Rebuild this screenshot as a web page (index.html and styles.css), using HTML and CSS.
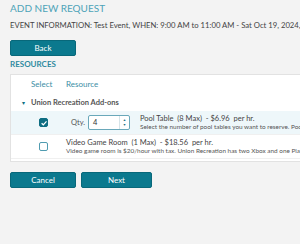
FILE: index.html
```html
<!DOCTYPE html>
<html lang="en">
<head>
    <meta charset="UTF-8">
    <meta name="viewport" content="width=device-width, initial-scale=1.0">
    <title>Add New Request</title>
    <link rel="stylesheet" href="styles.css">
</head>
<body>
    <div class="page">
        <h1 class="title">ADD NEW REQUEST</h1>
        <p class="event-info">EVENT INFORMATION: Test Event, WHEN: 9:00 AM to 11:00 AM - Sat Oct 19, 2024, WHERE: Union Recreation</p>
        <button class="btn btn-back">Back</button>
        <h2 class="section-title">RESOURCES</h2>
        <div class="panel">
            <div class="grid-row head-row">
                <div></div>
                <div class="head-cell">Select</div>
                <div class="head-cell">Resource</div>
            </div>
            <div class="grid-row group-row">
                <div class="arrow">&#9662;</div>
                <div class="group-name">Union Recreation Add-ons</div>
            </div>
            <div class="grid-row item-row selected">
                <div></div>
                <div class="check-cell"><span class="check checked"><svg viewBox="0 0 8 8" width="8" height="8"><path d="M1.6 4.2 L3.3 5.8 L6.5 2.3" fill="none" stroke="#fff" stroke-width="1.2"/></svg></span></div>
                <div class="resource-cell">
                    <span class="qty-label">Qty.</span>
                    <span class="qty-input"><span class="qty-value">4</span><span class="spinner"><span class="up">&#9650;</span><span class="down">&#9660;</span></span></span>
                    <div class="item-text">
                        <div class="item-name">Pool Table&nbsp; (8 Max)&nbsp; - $6.96&nbsp; per hr.</div>
                        <div class="item-desc">Select the number of pool tables you want to reserve. Pool tables are $6.96/hour with tax.</div>
                    </div>
                </div>
            </div>
            <div class="grid-row item-row">
                <div></div>
                <div class="check-cell"><span class="check"></span></div>
                <div class="resource-cell">
                    <div class="item-text">
                        <div class="item-name">Video Game Room&nbsp; (1 Max)&nbsp; - $18.56&nbsp; per hr.</div>
                        <div class="item-desc">Video game room is $20/hour with tax. Union Recreation has two Xbox and one Playstation.</div>
                    </div>
                </div>
            </div>
        </div>
        <div class="actions">
            <button class="btn btn-cancel">Cancel</button>
            <button class="btn btn-next">Next</button>
        </div>
    </div>
</body>
</html>
```

FILE: styles.css
```css
html {
    overflow: hidden;
}
body {
    font-family: Lato, "Open Sans", sans-serif;
    margin: 0;
    background-color: #f3f3f3;
    color: #444;
}
.page {
    width: 560px;
    padding: 2px 10px 0;
    white-space: nowrap;
}
.title {
    margin: 0;
    font-size: 10px;
    line-height: 12px;
    font-weight: 400;
    color: #4ea3b8;
}
.event-info {
    margin: 5px 0 0;
    font-size: 7.7px;
    line-height: 12px;
    color: #444;
}
.btn {
    font-family: inherit;
    font-size: 8px;
    color: #fff;
    background: #0b798e;
    border: 1px solid #08687a;
    border-radius: 2px;
    height: 16px;
    padding: 0;
    cursor: pointer;
}
.btn-back {
    display: block;
    width: 66px;
    margin-top: 9px;
}
.section-title {
    margin: 3px 0 0;
    font-size: 8px;
    line-height: 10px;
    font-weight: 700;
    color: #2f8aa0;
}
.panel {
    margin-top: 5px;
    background: #fff;
    border: 1px solid #e2e2e2;
    padding-bottom: 2px;
}
.grid-row {
    display: grid;
    grid-template-columns: 20px 35px 1fr;
    align-items: center;
}
.head-row {
    height: 18px;
}
.head-cell {
    font-size: 8px;
    color: #3b8ea5;
}
.group-row {
    height: 18px;
    grid-template-columns: 20px 1fr;
}
.arrow {
    font-size: 6px;
    color: #0b6f82;
    text-align: center;
    padding-left: 4px;
}
.group-name {
    font-size: 7.5px;
    font-weight: 700;
    color: #555;
}
.item-row {
    height: 23px;
    border-bottom: 1px solid #f0f0f0;
}
.item-row.selected {
    background: #eef7fa;
}
.check-cell {
    display: flex;
    padding-left: 8px;
}
.check {
    display: block;
    width: 7px;
    height: 7px;
    border: 1px solid #4f9bb0;
    border-radius: 2px;
    background: #fff;
}
.check svg {
    display: block;
    margin: -0.5px;
}
.check.checked {
    background: #0e6d82;
    border-color: #0e6d82;
}
.resource-cell {
    display: flex;
    align-items: center;
}
.qty-label {
    font-size: 7.5px;
    color: #555;
    margin-left: 5px;
    width: 17px;
}
.qty-input {
    display: flex;
    align-items: center;
    justify-content: space-between;
    width: 40px;
    height: 13px;
    border: 1px solid #6aa8ba;
    border-radius: 2px;
    background: #fff;
    margin-right: 10px;
}
.qty-value {
    font-size: 7.5px;
    color: #333;
    padding-left: 4px;
}
.spinner {
    display: flex;
    flex-direction: column;
    align-items: center;
    width: 9px;
    height: 13px;
    border-left: 1px solid #d6e4e9;
    justify-content: center;
    font-size: 3.5px;
    line-height: 4.5px;
    color: #1a6e83;
}
.item-text {
    line-height: 8px;
}
.item-name {
    font-size: 7.5px;
    color: #444;
}
.item-desc {
    font-size: 6.4px;
    color: #555;
}
.actions {
    display: flex;
    gap: 5px;
    margin-top: 10px;
}
.btn-cancel {
    width: 66px;
}
.btn-next {
    width: 71px;
}
```
